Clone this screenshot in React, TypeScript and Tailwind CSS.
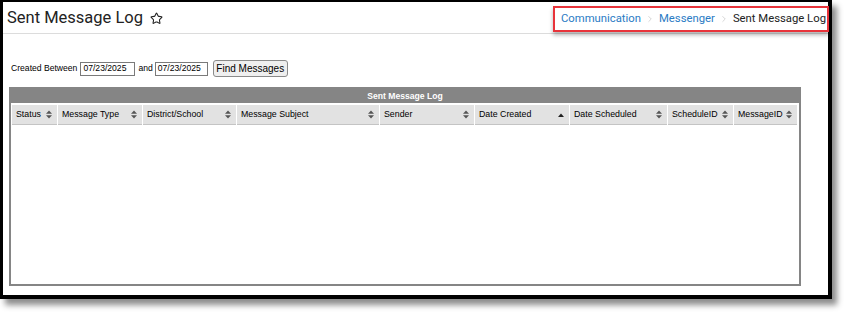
import { ChevronRight, Star } from "lucide-react";

const columns = [
  { label: "Status", width: 45 },
  { label: "Message Type", width: 84 },
  { label: "District/School", width: 93 },
  { label: "Message Subject", width: 142 },
  { label: "Sender", width: 94 },
  { label: "Date Created", width: 94, sorted: true },
  { label: "Date Scheduled", width: 97 },
  { label: "ScheduleID", width: 65 },
  { label: "MessageID", width: 63 },
];

function SortIcon({ up }: { up?: boolean }) {
  if (up) {
    return (
      <svg width="6" height="8" viewBox="0 0 6 8" className="shrink-0">
        <path d="M0 6 L3 2.5 L6 6 Z" fill="#222" />
      </svg>
    );
  }
  return (
    <svg width="6" height="9" viewBox="0 0 6 9" className="shrink-0">
      <path d="M0 3.8 L3 0.5 L6 3.8 Z" fill="#555" />
      <path d="M0 5.2 L3 8.5 L6 5.2 Z" fill="#555" />
    </svg>
  );
}

export default function App() {
  return (
    <div className="w-[848px] h-[314px] bg-white font-['Liberation_Sans',sans-serif]">
      <div className="w-[832px] h-[299px] border-l-[3px] border-t-2 border-r-4 border-b-4 border-black bg-white shadow-[5px_6px_6px_rgba(0,0,0,0.45)]">
        {/* page header */}
        <div className="h-[32px] border-b border-[#dcdcdc] flex items-center justify-between pl-[4px]">
          <div className="flex items-center gap-[7px] font-['Roboto',sans-serif] text-[16.5px] text-[#222] pt-[1px]">
            <span>Sent Message Log</span>
            <Star className="w-[13px] h-[13px]" strokeWidth={2} />
          </div>
          <div className="self-start mt-[4px] -mr-[1px] h-[26px] border-2 border-[#e8333a] shadow-[0_3px_4px_rgba(0,0,0,0.3)] flex items-center gap-[4px] pl-[6px] pr-[1px] font-['Roboto',sans-serif] text-[11.3px]">
            <span className="text-[#2a7bc4]">Communication</span>
            <ChevronRight className="w-[10px] h-[10px] text-[#bdbdbd]" strokeWidth={1.5} />
            <span className="text-[#2a7bc4]">Messenger</span>
            <ChevronRight className="w-[10px] h-[10px] text-[#bdbdbd]" strokeWidth={1.5} />
            <span className="text-[#222]">Sent Message Log</span>
          </div>
        </div>

        {/* search form */}
        <div className="mt-[26px] pl-[8px] flex items-center text-[8.6px] text-black h-[17px]">
          <span>Created Between</span>
          <div className="ml-[3px] w-[55px] h-[14px] border border-[#7a7a7a] flex items-center px-[2px]">07/23/2025</div>
          <span className="ml-[3px]">and</span>
          <div className="ml-[2px] w-[53px] h-[14px] border border-[#7a7a7a] flex items-center px-[2px]">07/23/2025</div>
          <button className="ml-[5px] h-[17px] w-[75px] border border-[#8a8a8a] rounded-[3px] bg-[#efefef] text-[10px] leading-none">
            Find Messages
          </button>
        </div>

        {/* log panel */}
        <div className="mt-[10px] ml-[6px] w-[792px] h-[199px] border-2 border-[#858585]">
          <div className="h-[14px] bg-[#858585] text-white font-bold text-[8.6px] flex items-center justify-center">
            Sent Message Log
          </div>
          <div className="flex gap-[1px] pl-[1px] pt-[2px]">
            {columns.map((c) => (
              <div
                key={c.label}
                style={{ width: c.width }}
                className="h-[20px] bg-[#e2e2e2] border-b border-[#c4c4c4] flex items-center justify-between pl-[4px] pr-[5px] text-[8.8px] text-black"
              >
                <span>{c.label}</span>
                <SortIcon up={c.sorted} />
              </div>
            ))}
          </div>
        </div>
      </div>
    </div>
  );
}
